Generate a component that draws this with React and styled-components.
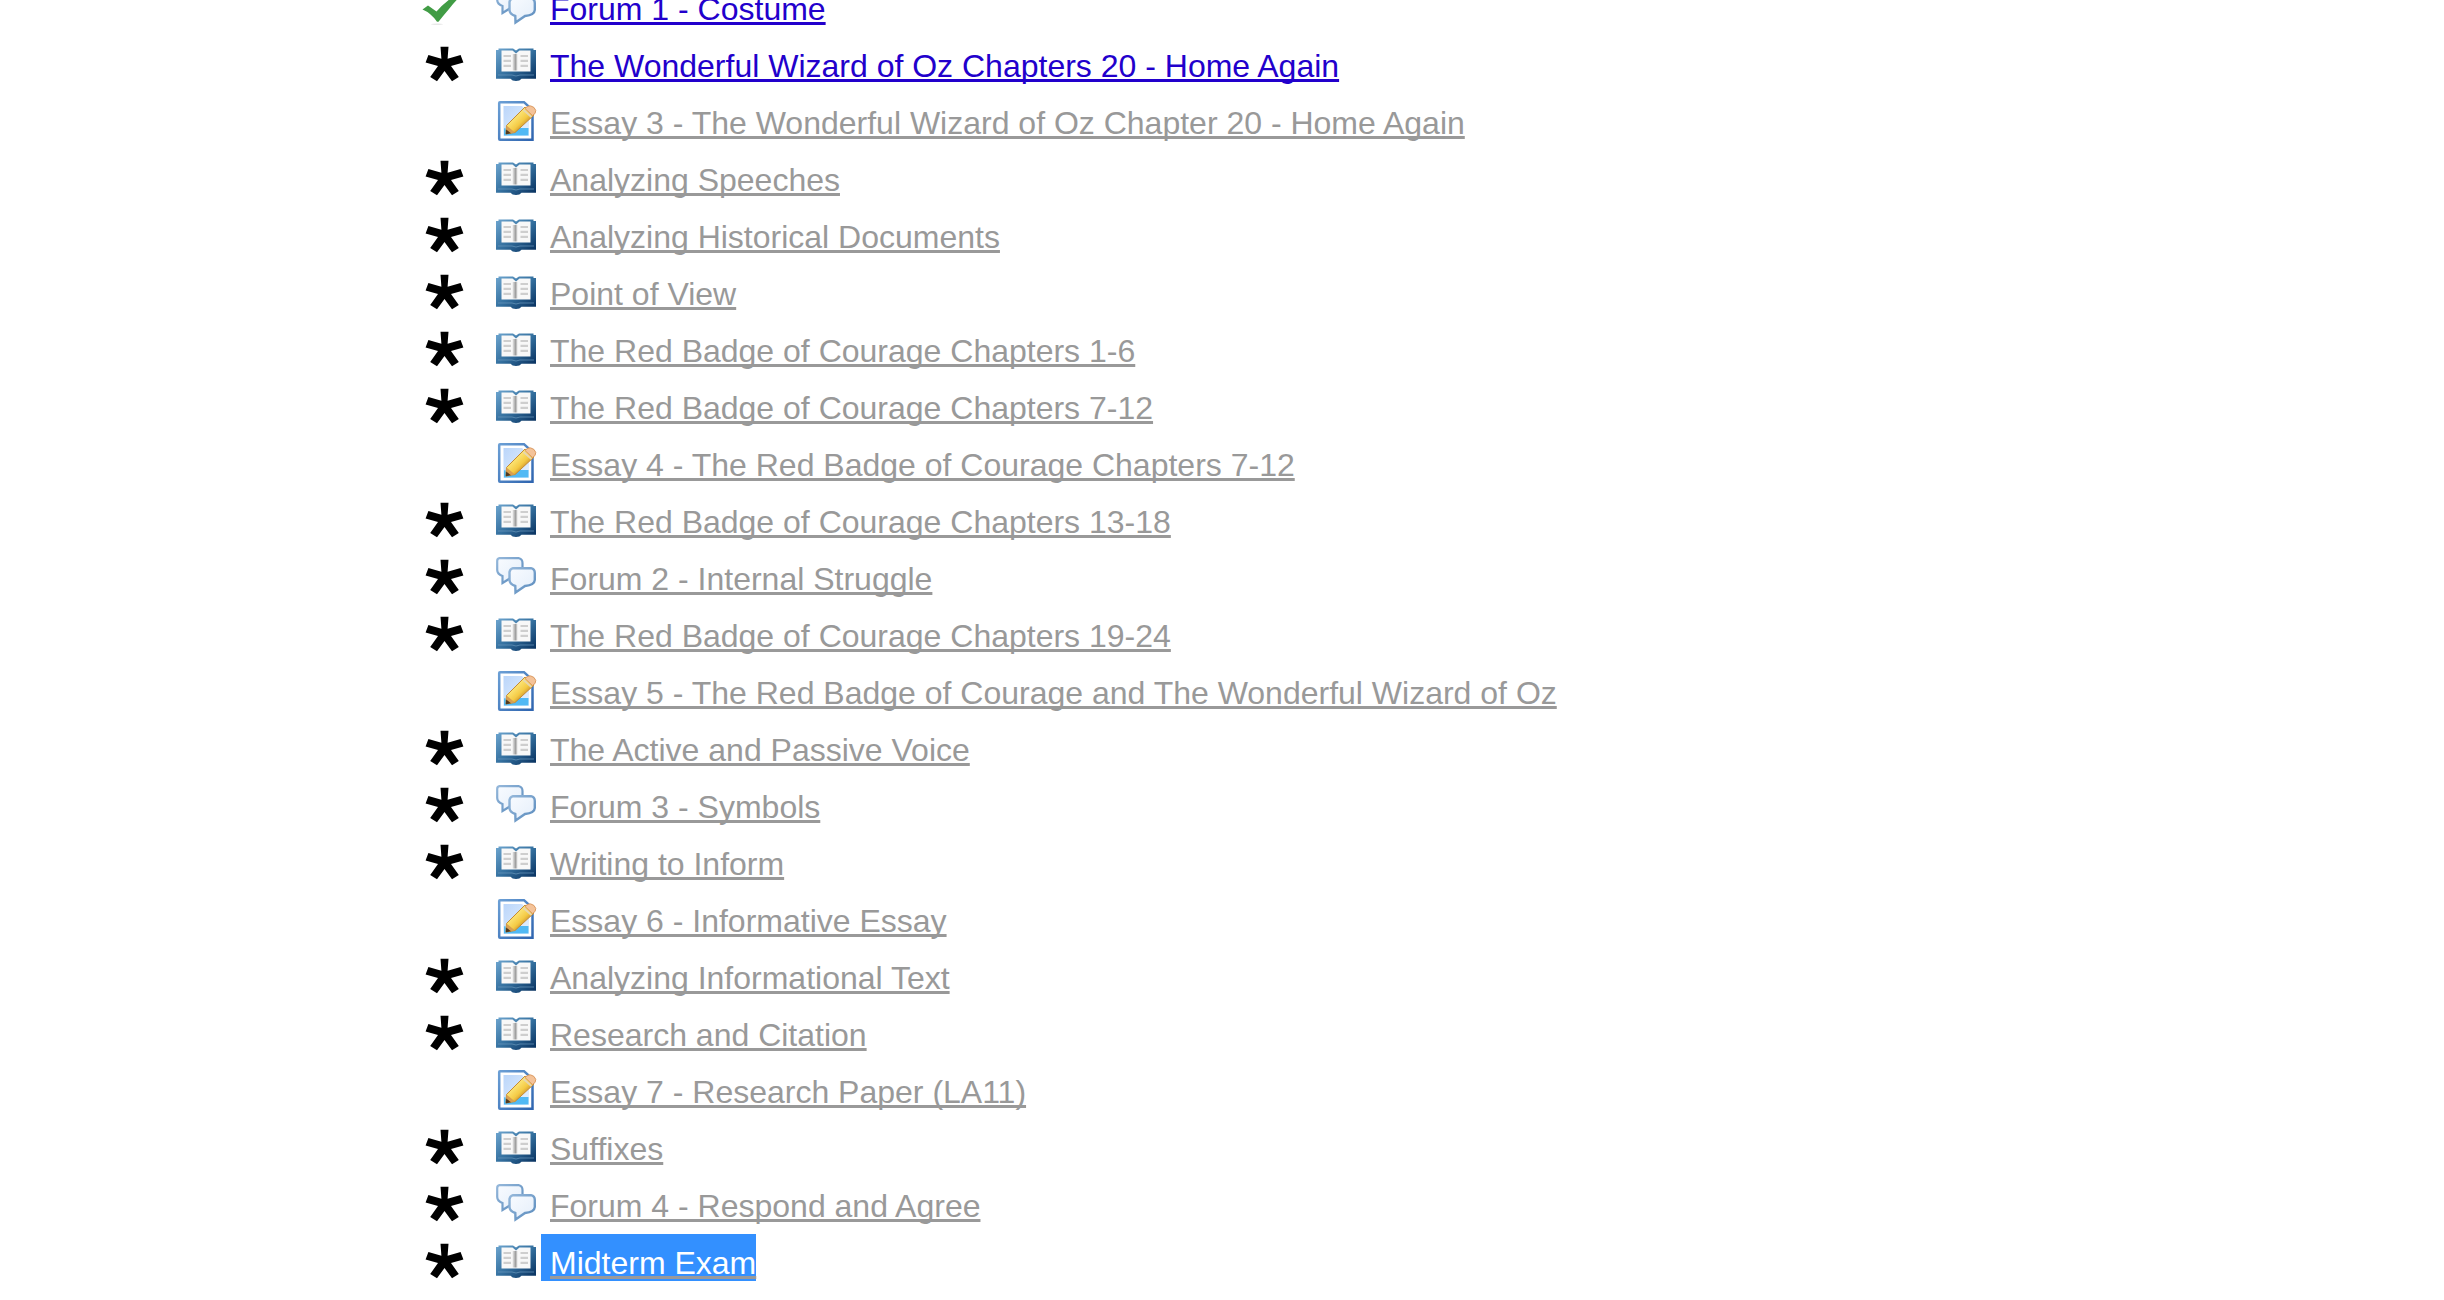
import React from 'react'
import styled, { createGlobalStyle } from 'styled-components'

const GlobalStyle = createGlobalStyle`
    body {
        margin: 0;
        background: #ffffff;
        font-family: 'Liberation Sans', Arial, sans-serif;
        overflow: hidden;
    }
`

// the list is scrolled: its first row is cut by the top edge
const ActivityList = styled.ul`
    display: flex;
    flex-direction: column;
    gap: 10px;
    margin: -20px 0 0;
    padding: 0 0 0 424px;
    list-style: none;
`
const ActivityRow = styled.li`
    display: flex;
    align-items: flex-end;
    height: 47px;
`
const StatusCell = styled.div`
    flex: none;
    width: 40px;
    height: 40px;
    margin-right: 32px;
`
const IconCell = styled.div`
    flex: none;
    width: 40px;
    height: 40px;
    margin-right: 5px;
`
const Drawing = styled.svg`
    display: block;
    width: 40px;
    height: 40px;
    overflow: visible;
`
const Label = styled.span`
    padding: 11px 0 0 9px;
    font-size: 32px;
    line-height: 36px;
    white-space: nowrap;
    background: ${(props) => (props.$selected ? '#3390ff' : 'transparent')};
`
const ActivityLink = styled.a`
    color: ${(props) =>
        props.$selected ? '#ffffff' : props.$open ? '#2200cc' : '#999999'};
    text-decoration: underline;
    text-decoration-color: ${(props) => (props.$open ? '#2200cc' : '#999999')};
    text-decoration-thickness: 3px;
    text-decoration-skip-ink: none;
    text-underline-offset: 2px;
`

const Star = () => (
    <Drawing viewBox="0 0 40 40" aria-hidden="true">
        <path d="M16.5 2.7H24.5L23.6 14.8L36.6 11L39.4 18.6L27 22L34.8 33L28 37.2L20.5 27L13 37.2L6.2 33L14 22L1.6 18.6L4.4 11L17.4 14.8Z" />
    </Drawing>
)

const Check = () => (
    <Drawing viewBox="0 0 40 40" aria-hidden="true">
        <ellipse cx="13" cy="37.3" rx="6" ry="0.8" fill="#e8e8e8" />
        <path
            d="M-1.5 22.5L4 18.500L12.500 24.500Q18 18 26 12L36 4L38 8Q31 14 25 22Q19 29 14.500 34.800H13Q7 26 -1.500 22.500Z"
            fill="#419c45"
        />
    </Drawing>
)

const Book = () => (
    <Drawing viewBox="0 0 40 40" aria-hidden="true">
        <defs>
            <linearGradient id="cover" x1="0" y1="0" x2="1" y2="1">
                <stop offset="0" stopColor="#6da5cf" />
                <stop offset="0.5" stopColor="#34709f" />
                <stop offset="1" stopColor="#052d5b" />
            </linearGradient>
            <linearGradient id="fold">
                <stop offset="0" stopColor="#e8e8e8" />
                <stop offset="0.6" stopColor="#a0a0a0" />
                <stop offset="1" stopColor="#e0e0e0" />
            </linearGradient>
        </defs>
        <path
            d="M0 6H2.5V4.5H17L20 6.5L23 4.5H37.5V6H40V34.800H25.500Q24 37 20 37T14.500 34.800H0Z"
            fill="url(#cover)"
        />
        <path d="M5.5 6.500H16.500L20 9.500L23.500 6.500H34.500V27.500H5.500Z" fill="#f8f8f8" />
        <rect x="16.500" y="10" width="5" height="16.500" fill="url(#fold)" />
        <path
            d="M7.500 12H15M7.500 16.800H15M7.500 21.800H15M24.500 12H32M24.500 16.800H32M24.500 21.800H32"
            stroke="#cecece"
            strokeWidth="2.200"
        />
        <path
            d="M2 31H16Q20 33 24 31H38"
            fill="none"
            stroke="#6998bc"
            strokeWidth="1"
            opacity="0.700"
        />
    </Drawing>
)

const Essay = () => (
    <Drawing viewBox="0 0 40 40" aria-hidden="true">
        <defs>
            <linearGradient id="frame" x1="0" y1="0" x2="1" y2="1">
                <stop offset="0" stopColor="#6b9fd5" />
                <stop offset="1" stopColor="#2f65b0" />
            </linearGradient>
            <linearGradient id="paper" x1="0" y1="0" x2="1" y2="1">
                <stop offset="0" stopColor="#bbd6fa" />
                <stop offset="1" stopColor="#e6f1fe" />
            </linearGradient>
            <linearGradient id="wood" x1="0" y1="0" x2="1" y2="1">
                <stop offset="0.25" stopColor="#fff08a" />
                <stop offset="0.55" stopColor="#f4ca45" />
                <stop offset="0.75" stopColor="#bd7c20" />
            </linearGradient>
        </defs>
        <path
            d="M4 1.200H28L36.500 9V38.800H4Q3.200 38.800 3.200 38V2Q3.200 1.200 4 1.200Z"
            fill="#ffffff"
            stroke="url(#frame)"
            strokeWidth="2.500"
        />
        <path d="M7.500 5H26L33 12V35H7.500Z" fill="url(#paper)" />
        <rect x="8" y="27" width="24.500" height="7.500" fill="#51b9f4" />
        <path d="M8 27H22L13 32Z" fill="#93d5fc" />
        <path
            d="M10.500 24.500L29 6L38 14L19 31.500L10 33Z"
            fill="url(#wood)"
            stroke="#c58a34"
        />
        <path d="M10.500 24.500L19 31.500L10 33Z" fill="#d79f52" />
        <path d="M10.200 28.500L15 32.200L9.800 33.200Z" fill="#4f3820" />
        <path
            d="M29 7.500L32 5.200Q34.500 4 38 6.500Q41 9.500 39 12.500L36.500 14.500Z"
            fill="#f4c399"
            stroke="#dc9b63"
        />
        <path d="M27.500 9L35.500 16" stroke="#e6d6b0" strokeWidth="2" />
    </Drawing>
)

const Forum = () => (
    <Drawing viewBox="0 0 40 40" aria-hidden="true">
        <defs>
            <linearGradient id="bubble" x1="0" y1="0" x2="1" y2="1">
                <stop offset="0" stopColor="#f8fbff" />
                <stop offset="1" stopColor="#e4eefa" />
            </linearGradient>
            <linearGradient id="rim" x1="0" y1="0" x2="1" y2="1">
                <stop offset="0" stopColor="#94b7da" />
                <stop offset="1" stopColor="#5a8bbd" />
            </linearGradient>
        </defs>
        <path
            d="M3.500 1.200H23Q26.500 2 26.500 6V15Q25 19 17 19.500L6.500 26V19Q1.200 17 1.200 13V4Q1.200 1.500 3.500 1.200Z"
            fill="url(#bubble)"
            stroke="url(#rim)"
            strokeWidth="2.200"
        />
        <path
            d="M17 11.200H35Q38.800 12 38.800 16V23Q38.500 28 29 29L19.500 35.500L19.300 29Q13.500 27 13.500 23V15Q14 12 17 11.200Z"
            fill="url(#bubble)"
            stroke="url(#rim)"
            strokeWidth="2.400"
        />
    </Drawing>
)

const icons = { book: Book, essay: Essay, forum: Forum }

const activities = [
    { type: 'forum', name: 'Forum 1 - Costume', status: 'done', open: true },
    {
        type: 'book',
        name: 'The Wonderful Wizard of Oz Chapters 20 - Home Again',
        status: 'star',
        open: true,
    },
    {
        type: 'essay',
        name: 'Essay 3 - The Wonderful Wizard of Oz Chapter 20 - Home Again',
    },
    { type: 'book', name: 'Analyzing Speeches', status: 'star' },
    { type: 'book', name: 'Analyzing Historical Documents', status: 'star' },
    { type: 'book', name: 'Point of View', status: 'star' },
    {
        type: 'book',
        name: 'The Red Badge of Courage Chapters 1-6',
        status: 'star',
    },
    {
        type: 'book',
        name: 'The Red Badge of Courage Chapters 7-12',
        status: 'star',
    },
    {
        type: 'essay',
        name: 'Essay 4 - The Red Badge of Courage Chapters 7-12',
    },
    {
        type: 'book',
        name: 'The Red Badge of Courage Chapters 13-18',
        status: 'star',
    },
    { type: 'forum', name: 'Forum 2 - Internal Struggle', status: 'star' },
    {
        type: 'book',
        name: 'The Red Badge of Courage Chapters 19-24',
        status: 'star',
    },
    {
        type: 'essay',
        name: 'Essay 5 - The Red Badge of Courage and The Wonderful Wizard of Oz',
    },
    { type: 'book', name: 'The Active and Passive Voice', status: 'star' },
    { type: 'forum', name: 'Forum 3 - Symbols', status: 'star' },
    { type: 'book', name: 'Writing to Inform', status: 'star' },
    { type: 'essay', name: 'Essay 6 - Informative Essay' },
    { type: 'book', name: 'Analyzing Informational Text', status: 'star' },
    { type: 'book', name: 'Research and Citation', status: 'star' },
    { type: 'essay', name: 'Essay 7 - Research Paper (LA11)' },
    { type: 'book', name: 'Suffixes', status: 'star' },
    { type: 'forum', name: 'Forum 4 - Respond and Agree', status: 'star' },
    { type: 'book', name: 'Midterm Exam', status: 'star', selected: true },
]

const Activity = ({ item }) => {
    const Icon = icons[item.type]
    return (
        <ActivityRow>
            <StatusCell>
                {item.status === 'done' && <Check />}
                {item.status === 'star' && <Star />}
            </StatusCell>
            <IconCell>
                <Icon />
            </IconCell>
            <Label $selected={item.selected}>
                <ActivityLink
                    href="#"
                    $open={item.open}
                    $selected={item.selected}
                >
                    {item.name}
                </ActivityLink>
            </Label>
        </ActivityRow>
    )
}

export default function App() {
    return (
        <>
            <GlobalStyle />
            <main>
                <ActivityList>
                    {activities.map((item) => (
                        <Activity key={item.name} item={item} />
                    ))}
                </ActivityList>
            </main>
        </>
    )
}
